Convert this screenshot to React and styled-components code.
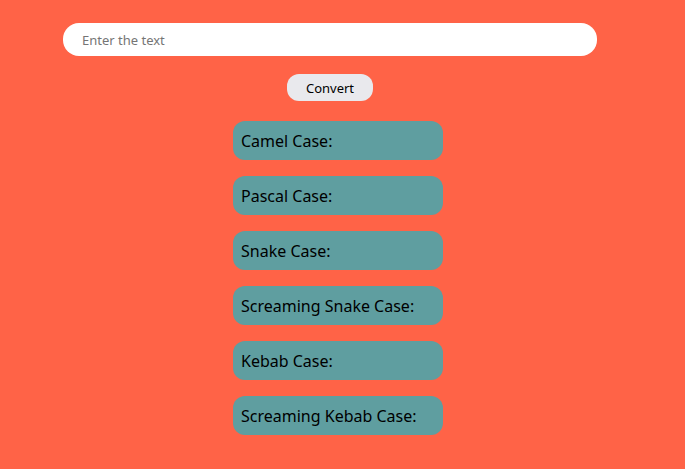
import React from "react";
import styled, { createGlobalStyle } from "styled-components";

const Global = createGlobalStyle`
  html, body { margin: 0; padding: 0; background: #ff6347; }
  body { font-family: "Noto Sans", "Open Sans", sans-serif; }
  #root { min-height: 469px; }
`;

const Page = styled.div`
  width: 660px;
  padding-top: 23px;
  display: flex;
  flex-direction: column;
  align-items: center;
`;

const Input = styled.input`
  box-sizing: border-box;
  width: 534px;
  height: 33px;
  border: none;
  border-radius: 16px;
  background: #fff;
  padding: 0 19px;
  font-family: "Noto Sans", sans-serif;
  font-size: 13px;
  outline: none;
  &::placeholder { color: #757575; }
`;

const Button = styled.button`
  margin-top: 18px;
  width: 86px;
  height: 27px;
  border: none;
  border-radius: 12px;
  background: #e9e9ed;
  color: #000;
  font-family: "Noto Sans", sans-serif;
  font-size: 13px;
  padding: 0;
`;

const List = styled.div`
  margin-top: 20px;
  margin-left: 16px;
  display: flex;
  flex-direction: column;
  gap: 16px;
`;

const Result = styled.div`
  box-sizing: border-box;
  width: 210px;
  height: 39px;
  border-radius: 12px;
  background: #5f9ea0;
  color: #000;
  font-size: 16px;
  padding-left: 8px;
  display: flex;
  align-items: center;
`;

const labels = [
  "Camel Case:",
  "Pascal Case:",
  "Snake Case:",
  "Screaming Snake Case:",
  "Kebab Case:",
  "Screaming Kebab Case:",
];

export default function App() {
  return (
    <>
      <Global />
      <Page>
        <Input placeholder="Enter the text" />
        <Button>Convert</Button>
        <List>
          {labels.map((l) => (
            <Result key={l}>{l}</Result>
          ))}
        </List>
      </Page>
    </>
  );
}
